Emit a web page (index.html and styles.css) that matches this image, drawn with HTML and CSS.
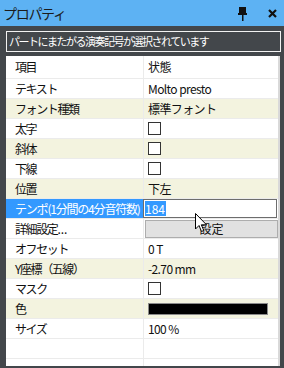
FILE: index.html
```html
<!DOCTYPE html>
<html lang="ja">
<head>
    <meta charset="UTF-8">
    <title>プロパティ</title>
    <link rel="stylesheet" href="styles.css">
</head>
<body>
    <div class="titlebar">
        <span class="title">プロパティ</span>
        <span class="tools">
            <svg class="pin" width="9" height="14" viewBox="0 0 9 14"><rect x="1" y="0" width="7" height="7" fill="#111"/><rect x="0" y="6" width="9" height="2" fill="#111"/><rect x="4" y="8" width="1.5" height="6" fill="#111"/></svg>
            <svg class="close" width="9" height="9" viewBox="0 0 9 9"><path d="M1 1 L8 8 M8 1 L1 8" stroke="#111" stroke-width="2.2"/></svg>
        </span>
    </div>

    <div class="msg">パートにまたがる演奏記号が選択されています</div>

    <div class="grid">
        <div class="row head"><div class="key">項目</div><div class="val">状態</div></div>
        <div class="row"><div class="key">テキスト</div><div class="val">Molto presto</div></div>
        <div class="row alt"><div class="key">フォント種類</div><div class="val">標準フォント</div></div>
        <div class="row"><div class="key">太字</div><div class="val"><span class="check"></span></div></div>
        <div class="row alt"><div class="key">斜体</div><div class="val"><span class="check"></span></div></div>
        <div class="row"><div class="key">下線</div><div class="val"><span class="check"></span></div></div>
        <div class="row alt"><div class="key">位置</div><div class="val">下左</div></div>
        <div class="row sel"><div class="key">テンポ(1分間の4分音符数)</div><div class="val"><span class="edit"><span class="hl">184</span></span></div></div>
        <div class="row"><div class="key">詳細設定<span class="dots">...</span></div><div class="val"><span class="btn">設定</span></div></div>
        <div class="row"><div class="key">オフセット</div><div class="val">0 T</div></div>
        <div class="row alt"><div class="key">Y座標（五線）</div><div class="val">-2.70 mm</div></div>
        <div class="row"><div class="key">マスク</div><div class="val"><span class="check"></span></div></div>
        <div class="row alt"><div class="key">色</div><div class="val"><span class="swatch"></span></div></div>
        <div class="row"><div class="key">サイズ</div><div class="val">100 %</div></div>
        <div class="row"><div class="key"></div><div class="val"></div></div>
        <div class="row"><div class="key"></div><div class="val"></div></div>
    </div>

    <svg class="cursor" width="13" height="20" viewBox="0 0 13 20"><path d="M0.5 0.5 L0.5 16 L4 12.5 L6.5 18.5 L8.8 17.5 L6.3 11.8 L11.5 11.8 Z" fill="#fff" stroke="#000" stroke-width="1"/></svg>
</body>
</html>
```

FILE: styles.css
```css
body { margin: 0; width: 284px; height: 368px; background: #43474b; font-family: "Noto Sans CJK JP", "Noto Sans", sans-serif; font-size: 12px; position: relative; overflow: hidden; }
.titlebar { height: 26px; background: #5db2f3; display: flex; align-items: center; justify-content: space-between; padding: 0 7px 0 3px; }
.title { font-size: 14px; color: #1b1b1b; letter-spacing: -1.3px; }
.tools { display: flex; align-items: center; gap: 21px; }
.pin { margin-top: 1px; }
.msg { margin: 5px 3px 0 6px; height: 19px; border: 1px solid #f2f2f2; color: #fff; font-size: 11px; line-height: 18px; padding-left: 2px; white-space: nowrap; overflow: hidden; letter-spacing: -1.5px; }
.grid { margin: 4px 4px 0 6px; height: 310px; background: #fff; border-right: 2px solid #d9d9d9; overflow: hidden; }
.row { display: grid; grid-template-columns: 137px 1fr; height: 20px; box-sizing: border-box; border-bottom: 1px solid #ebebeb; line-height: 19px; color: #111; }
.row.head { height: 23px; line-height: 22px; }
.row.alt { background: #f3f3df; }
.key { padding-left: 9px; white-space: nowrap; overflow: hidden; letter-spacing: -1.4px; }
.dots { letter-spacing: 0; }
.val { border-left: 1px solid #ebebeb; padding-left: 4px; display: flex; align-items: center; white-space: nowrap; letter-spacing: -0.6px; }
.check { width: 11px; height: 11px; border: 1px solid #333; background: #fff; margin-left: 0; }
.sel .key { background: #3399ff; color: #fff; letter-spacing: -1.2px; }
.sel .val { padding: 0; border-left: none; }
.edit { width: 134px; height: 19px; box-sizing: border-box; border: 1px solid #6d6d6d; background: #fff; display: flex; align-items: center; padding-left: 1px; letter-spacing: 0; }
.hl { background: #3399ff; color: #fff; line-height: 15px; padding-right: 1px; }
.btn { width: 133px; height: 18px; margin-left: -3px; box-sizing: border-box; background: #e1e1e1; border: 1px solid #adadad; text-align: center; line-height: 16px; letter-spacing: 0; }
.swatch { width: 118px; height: 10px; background: #000; border: 1px solid #8a8a8a; }
.cursor { position: absolute; left: 195px; top: 213px; }
```
